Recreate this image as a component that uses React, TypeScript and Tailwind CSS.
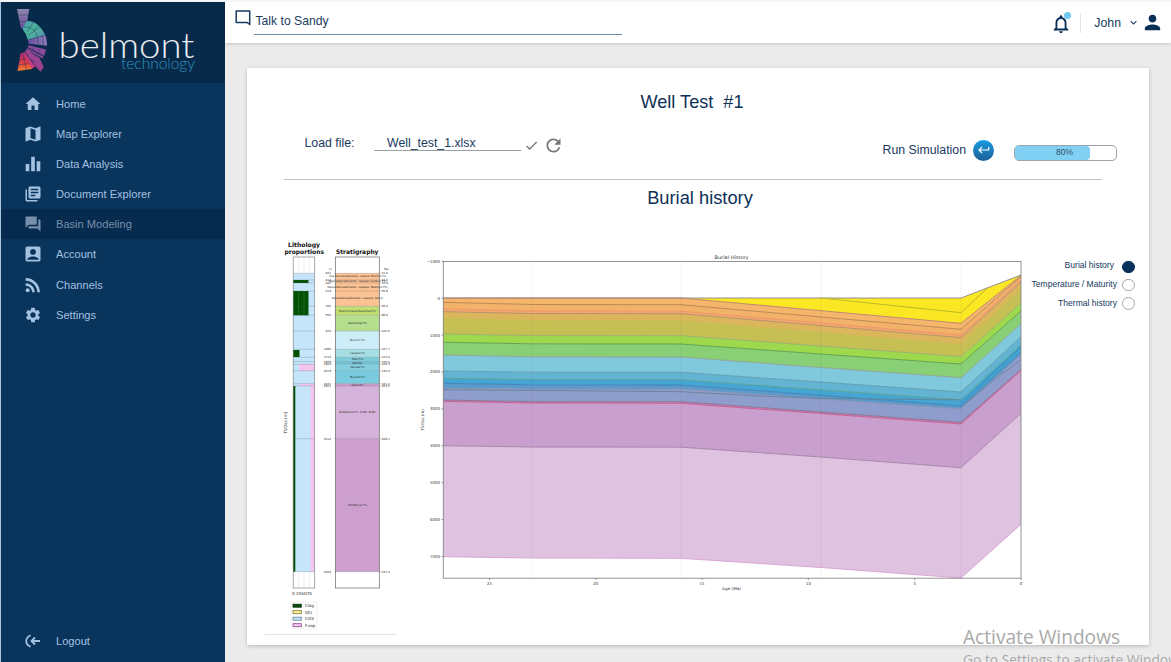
import React from "react";
import type { IconType } from "react-icons";
import {
  MdHome,
  MdMap,
  MdEqualizer,
  MdLibraryBooks,
  MdQuestionAnswer,
  MdAccountBox,
  MdRssFeed,
  MdSettings,
  MdNotificationsNone,
  MdPerson,
  MdExpandMore,
  MdCheck,
  MdRefresh,
  MdKeyboardReturn,
} from "react-icons/md";

type NavItem = { label: string; icon: IconType; size: number; active?: boolean; nudge?: boolean };

const nav: NavItem[] = [
  { label: "Home", icon: MdHome, size: 18 },
  { label: "Map Explorer", icon: MdMap, size: 20 },
  { label: "Data Analysis", icon: MdEqualizer, size: 22 },
  { label: "Document Explorer", icon: MdLibraryBooks, size: 18 },
  { label: "Basin Modeling", icon: MdQuestionAnswer, size: 18, active: true },
  { label: "Account", icon: MdAccountBox, size: 20 },
  { label: "Channels", icon: MdRssFeed, size: 22, nudge: true },
  { label: "Settings", icon: MdSettings, size: 18 },
];

function Logo() {
  return (
    <svg width="224" height="81" viewBox="1 2 224 81" className="block">
      <defs>
        <linearGradient id="lg1" x1="0" y1="0" x2="0" y2="1">
          <stop offset="0" stopColor="#8f86ac" />
          <stop offset="1" stopColor="#6a4f9a" />
        </linearGradient>
        <linearGradient id="lg2" x1="0" y1="0" x2="1" y2="1">
          <stop offset="0" stopColor="#4a9fae" />
          <stop offset=".5" stopColor="#4db39a" />
          <stop offset="1" stopColor="#5c86b4" />
        </linearGradient>
        <linearGradient id="lg3" x1="0" y1="0" x2="1" y2="0">
          <stop offset="0" stopColor="#6a4fa0" />
          <stop offset="1" stopColor="#8d7bb5" />
        </linearGradient>
        <linearGradient id="lg4" x1="0" y1="0" x2="0" y2="1">
          <stop offset="0" stopColor="#b0307c" />
          <stop offset=".55" stopColor="#dd3c44" />
          <stop offset="1" stopColor="#f0872e" />
        </linearGradient>
      </defs>
      <path d="M17 9H29.3L26 27.5L21 28.3Z" fill="url(#lg1)" />
      <path d="M26.500 20.800Q34 20.500 40 27Q44 31.500 45.500 35.500L28 40Q26.500 34 22.500 29Z" fill="url(#lg2)" />
      <path d="M45.500 35.500Q47 40 47 45.700L28.700 43.700Q28.600 41.500 28 40Z" fill="url(#lg3)" />
      <path d="M28.400 45.300L46 49.500Q45.300 54.500 42.500 58.500L27 49.500Z" fill="#8b4b9c" />
      <path d="M27 49L39.500 58L43.800 67L40.500 71.800L35.500 66.500L25 51.800Z" fill="#9a4391" />
      <path d="M24.500 51.800L35.500 66.500L31.500 69L22.500 53Z" fill="#c43b7f" />
      <path d="M20.800 52.700L24 53.600L32 69L17.600 71Z" fill="url(#lg4)" />
      <g stroke="#082a4a" strokeWidth="0.5" strokeOpacity=".75" fill="none">
        <path d="M18 15L28.200 15M20 21.500H27.200M24 27Q32 26.500 36 33Q38 37 38.500 45M27 32L33.500 22M28 35.500L40 27M34 30L38.500 25M28.500 39.500L46 35M43 45V36" />
        <path d="M34 48L31 52L36 57M40 49L36.500 55.500M24.500 51.800L35.500 66.500M22.500 53L26.500 70M18 65L29 63.500M19 60L26 58.500M35.500 62L31 60" />
      </g>
      <path d="M27.500 47.500L45 57" stroke="#082a4a" strokeWidth="1" />
      <text x="58.500" y="57.500" textLength="136" lengthAdjust="spacingAndGlyphs" className="fill-[#e9edf2] font-['Lato'] text-[36px] font-light">
        belmont
      </text>
      <text x="121" y="69.300" textLength="74" lengthAdjust="spacingAndGlyphs" className="fill-[#2f93bb] font-['Lato'] text-[15.500px] font-light">
        technology
      </text>
    </svg>
  );
}

function Sidebar() {
  return (
    <aside className="flex w-[225px] shrink-0 flex-col border-l border-[#a9c6dd] bg-[#09345b]">
      <div className="h-[81px] bg-[#082a4a]">
        <Logo />
      </div>
      <nav className="mt-[6px] flex flex-col">
        {nav.map(({ label, icon: Icon, size, active, nudge }) => (
          <a
            key={label}
            className={
              "flex h-[30px] items-center text-[11.100px] " +
              (active ? "bg-[#072b4e] text-[#7690ab]" : "text-[#a3c1e0]") +
              (nudge ? " mt-px" : "")
            }
          >
            <span className="ml-[21px] mr-[12px] flex w-[22px] justify-center">
              <Icon size={size} />
            </span>
            {label}
          </a>
        ))}
      </nav>
      <a className="mb-[6px] mt-auto flex h-[30px] items-center text-[11.100px] text-[#a3c1e0]">
        <svg width="16" height="16" viewBox="0 0 16 16" className="ml-[24px] mr-[15px]" fill="none" stroke="#a3c1e0" strokeWidth="1.800">
          <path d="M5.500 2.200Q1.200 4.500 1.200 8T5.500 13.800M15 8H7M10 4.500L6.500 8L10 11.500" />
        </svg>
        Logout
      </a>
    </aside>
  );
}

function Header() {
  return (
    <header className="z-10 flex h-[41px] shrink-0 bg-white text-[#173a60] shadow-[0_1px_3px_rgba(0,0,0,0.18)]">
      <svg width="16" height="17" viewBox="0 0 16 17" className="ml-[10px] mt-[8px]" fill="none" stroke="#173a60" strokeWidth="1.500">
        <path d="M1.200 1H14.700V14.500L12.200 12.500H1.200Z" strokeLinejoin="round" />
      </svg>
      <div className="ml-[3px] mt-[10px] h-[23px] w-[368px] border-b border-[#6d8ba5] pl-[1.500px] text-[12.200px] leading-[19px]">
        Talk to Sandy
      </div>
      <div className="ml-auto mr-[7px] flex h-[41px] items-center">
        <div className="relative mr-[8px] mt-[2px]">
          <MdNotificationsNone size={22} color="#0a2f56" />
          <span className="absolute right-[1px] top-[-1px] h-[7px] w-[7px] rounded-full bg-[#6cc9f0]" />
        </div>
        <div className="mr-[13px] h-[20px] w-px bg-[#e2e5e8]" />
        <span className="mt-px text-[12.300px]">John</span>
        <MdExpandMore size={13} className="ml-[6px] mr-px" />
        <MdPerson size={23} color="#0a2f56" />
      </div>
    </header>
  );
}

const segs: [number, number, string][] = [
  [273.3, 306.3, "#fbc294"],
  [306.3, 315.3, "#bfdd72"],
  [315.3, 331, "#b5df8e"],
  [331, 349.3, "#cdeef9"],
  [349.3, 357.3, "#a6dfe3"],
  [357.3, 361.5, "#7dcbdb"],
  [361.5, 364.3, "#6fc4d8"],
  [364.3, 370.7, "#83cfe0"],
  [370.7, 383.7, "#7acbdd"],
  [383.7, 386, "#cf9fce"],
  [386, 438.7, "#d5b2d9"],
  [438.7, 571.7, "#cd9fcf"],
];

const depthMarks: [number, string, string][] = [
  [273.3, "-621", "11.6"],
  [280, "-414", "23.0"],
  [283, "-320", "33.9"],
  [291, "-119", "55.8"],
  [306.3, "320", "66.0"],
  [315.3, "550", "88.6"],
  [331, "970", "100.5"],
  [349.3, "1486", "107.7"],
  [357.3, "1713", "113.0"],
  [361.5, "1829", "125.0"],
  [364.3, "1903", "126.3"],
  [370.7, "2079", "145.0"],
  [383.7, "2431", "161.2"],
  [386, "2501", "163.5"],
  [438.7, "3112", "208.1"],
  [571.7, "6162", "237.0"],
];

const segLabels: [number, string, number][] = [
  [277.3, "Unpreserved sediments - opaque: Planform Fm", 57],
  [282.0, "Deposited sediments - opaque: Cardium Fm", 57],
  [287.6, "Deposited sediments - opaque: Meantop Fm", 60],
  [299.2, "Deposited sediments - opaque: Tatum", 51],
  [311.6, "Mount of Good Samaritan Fm", 37],
  [323.9, "Nambenge Fm", 19],
  [340.8, "Bucomi Fm", 15],
  [353.9, "Cangana Fm", 15],
  [360.1, "Mavi Fm", 11],
  [363.8, "Bati Mu", 10],
  [368.4, "Mavude Fm", 14],
  [378.2, "Bucond Fm", 15],
  [386.0, "Salvit Fm", 12],
  [413.4, "Sedalations Fm. & Mbr. B Mbr", 37],
  [506.2, "Wild Blumar Fm", 19],
];

const legend = [
  { name: "Clay", fill: "#035203", stroke: "#0a2a0a" },
  { name: "Qtz", fill: "#fdf29a", stroke: "#7d7430" },
  { name: "CO3", fill: "#c3e6fb", stroke: "#5f7f9a" },
  { name: "Fvop", fill: "#f7c8f3", stroke: "#85458c" },
];

function Stratigraphy() {
  return (
    <svg width="131" height="396" viewBox="265 239 131 396" className="font-['DejaVu_Sans']" fill="#222">
      <g fontSize="6.200" fontWeight="700" fill="#111">
        <text x="288" y="247" textLength="32" lengthAdjust="spacingAndGlyphs">Lithology</text>
        <text x="284.500" y="254" textLength="39.500" lengthAdjust="spacingAndGlyphs">proportions</text>
        <text x="336" y="254" textLength="42.500" lengthAdjust="spacingAndGlyphs">Stratigraphy</text>
      </g>
      <path d="M298.500 257V273M304 257V273M309.500 257V273M298.500 572V588M304 572V588M309.500 572V588" stroke="#e8e8e8" strokeWidth=".6" />
      <rect x="293" y="273.300" width="21.700" height="298.400" fill="#c5e5fa" />
      <g fill="#035203">
        <rect x="293" y="280" width="15.500" height="3" />
        <rect x="293" y="291" width="15.500" height="24.300" />
        <rect x="293" y="350" width="6.500" height="7" />
        <rect x="293" y="386" width="2.300" height="185.700" />
      </g>
      <path d="M298.500 291V315.300M304 291V315.300" stroke="#3c7a3c" strokeWidth=".5" />
      <g fill="#f4c6ef">
        <rect x="299.300" y="364" width="15.400" height="7" />
        <rect x="299.300" y="383.700" width="15.400" height="2.300" />
        <rect x="310.500" y="386" width="4.200" height="185.700" />
      </g>
      {segs.map(([a, b, c]) => (
        <rect key={a} x="335.500" y={a} width="43.800" height={b - a} fill={c} />
      ))}
      {depthMarks.map(([y, l, r]) => (
        <g key={y} fontSize="2.900">
          <path d={`M293 ${y}H314.700M334 ${y}H381`} stroke="#4b5563" strokeOpacity=".45" strokeWidth=".5" />
          <text x="331" y={y + 1} textAnchor="end">{l}</text>
          <text x="381.500" y={y + 1}>{r}</text>
        </g>
      ))}
      <g fontSize="2.900">
        <text x="329" y="269.700">m</text>
        <text x="384" y="269.700">Ma</text>
      </g>
      {segLabels.map(([y, t, w]) => (
        <text key={t} x={357.5 - w / 2} y={y} fontSize="2.900" textLength={w} lengthAdjust="spacingAndGlyphs">
          {t}
        </text>
      ))}
      <g fill="none" stroke="#666" strokeWidth=".7">
        <rect x="293.200" y="257" width="21.500" height="331" stroke="#888" />
        <rect x="335.500" y="257" width="43.800" height="331" />
      </g>
      <text x="292" y="595" fontSize="4.200" textLength="20" lengthAdjust="spacingAndGlyphs">0 255075</text>
      <text transform="translate(287 433.500) rotate(-90)" fontSize="4.200" textLength="22" lengthAdjust="spacingAndGlyphs">TVDss (m)</text>
      <rect x="291" y="602" width="26" height="27" rx="1" fill="none" stroke="#e5e5e5" strokeWidth=".6" />
      {legend.map((l, i) => (
        <g key={l.name}>
          <rect x="293" y={604.2 + i * 6.5} width="8.300" height="3" fill={l.fill} stroke={l.stroke} strokeWidth=".8" />
          <text x="305" y={607.4 + i * 6.5} fontSize="4.200">{l.name}</text>
        </g>
      ))}
      <path d="M265 634.500H396" stroke="#e2e2e2" />
    </svg>
  );
}

const xs = [443, 531.6, 681, 821, 961, 1021];

type Horizon = { y: number[]; fill?: string; line: string };

// Each horizon is the top of the layer that its fill colours.
const horizons: Horizon[] = [
  { y: [298, 298, 298, 298, 298, 275], fill: "#fbe723", line: "#8a8490" },
  { y: [298, 298, 298, 310.7, 323.3, 275.3], fill: "#f5b66c", line: "#b98268" },
  { y: [302.3, 304.5, 304.7, 317, 329.3, 276.5], fill: "#f3b26a", line: "#b5804e" },
  { y: [309, 311, 311.2, 323, 335, 280], fill: "#f0a96c", line: "#f08f62" },
  { y: [311.7, 313.6, 313.7, 325.7, 337.7, 282], fill: "#dcb65c", line: "#b48a68" },
  { y: [317.7, 320, 320.3, 332, 344, 289], fill: "#c6c054", line: "#cfb750" },
  { y: [334, 335.6, 335.7, 346, 356.7, 303], fill: "#9ed84c", line: "#98ad70" },
  { y: [342.3, 343.8, 344, 354, 364, 311], fill: "#88cf76", line: "#5c9c48" },
  { y: [355, 356.8, 357, 367.5, 377.7, 323.7], fill: "#80c8dc", line: "#8fa08f" },
  { y: [371, 372.2, 372.3, 382, 392, 336.7], fill: "#62b4d2", line: "#5f9cb0" },
  { y: [378.3, 379.6, 379.7, 390, 399.7, 345], fill: "#45a5d3", line: "#559f90" },
  { y: [383.3, 384.8, 385, 395.3, 406, 352], fill: "#5b9bcb", line: "#3a80b4" },
  { y: [388.3, 389, 389, 399, 409, 355], fill: "#8f9dcc", line: "#8790b0" },
  { y: [400, 401.6, 401.7, 412, 422.3, 369.3], fill: "#c087b8", line: "#82708f" },
  { y: [401.3, 403, 403.3, 413.5, 424, 370.5], fill: "#c99fce", line: "#c8528c" },
  { y: [445.7, 447, 447.2, 457, 467.7, 413.3], fill: "#dfc2e0", line: "#a080a4" },
  { y: [556.7, 558, 558.3, 567.5, 578, 524.3], line: "#d79fd2" },
];

const pts = (y: number[]) => y.map((v, i) => `${xs[i]},${v}`);

const yTicks = [-1000, 0, 1000, 2000, 3000, 4000, 5000, 6000, 7000];
const xTicks = [25, 20, 15, 10, 5, 0];

function BurialChart() {
  return (
    <svg width="612" height="345" viewBox="415 249 612 345" className="font-['DejaVu_Sans']" fill="#333">
      <text x="714.500" y="258.500" fontSize="4.800" textLength="34" lengthAdjust="spacingAndGlyphs">Burial History</text>
      {horizons.slice(0, -1).map((h, i) => (
        <polygon key={i} points={[...pts(h.y), ...pts(horizons[i + 1].y).reverse()].join(" ")} fill={h.fill} />
      ))}
      <g fill="none" strokeWidth=".9">
        {horizons.map((h, i) => (
          <polyline key={i} points={pts(h.y).join(" ")} stroke={h.line} />
        ))}
        <path d="M821 298L961 312.700L988 287.500" stroke="#b5b526" />
        <path d="M443 389.700L531.600 390.400L681 391.700L770 396.500L821 398.300L890 399.200L961 399.900" stroke="#63839a" />
        <path d="M961 407L1000 375L1009 369L1021 359.500" stroke="#71809f" />
        <path d="M961 403.300L1021 347" stroke="#3384b8" />
      </g>
      <path d="M531.600 262V578M681 262V578M821 262V578M961 262V578" stroke="#40305a" strokeOpacity=".07" strokeWidth=".8" />
      <rect x="443.300" y="261.500" width="577.700" height="316.700" fill="none" stroke="#888" strokeWidth=".9" />
      <g fontSize="3.900">
        {yTicks.map((t) => {
          const y = 298.2 + t * 0.0369;
          return (
            <g key={t}>
              <path d={`M441.500 ${y}H443.300`} stroke="#555" strokeWidth=".6" />
              <text x="440" y={y + 1.4} textAnchor="end">{t < 0 ? "−1000" : t}</text>
            </g>
          );
        })}
        {xTicks.map((t) => {
          const x = 1021 - t * 21.26;
          return (
            <g key={t}>
              <path d={`M${x} 578.200V580`} stroke="#555" strokeWidth=".6" />
              <text x={x} y="584.600" textAnchor="middle">{t}</text>
            </g>
          );
        })}
        <text x="722" y="590" textLength="19" lengthAdjust="spacingAndGlyphs">Age (Ma)</text>
        <text transform="translate(423.500 430.500) rotate(-90)" textLength="21.500" lengthAdjust="spacingAndGlyphs">TVDss (m)</text>
      </g>
    </svg>
  );
}

const views = [
  { label: "Burial history", on: true },
  { label: "Temperature / Maturity", on: false },
  { label: "Thermal history", on: false },
];

function WellCard() {
  return (
    <section className="ml-[22px] mt-[25px] flex h-[577px] w-[902px] flex-col bg-white text-[#173a60] shadow-[0_1px_4px_rgba(0,0,0,0.22)]">
      <h1 className="mt-[21px] whitespace-pre pr-[12px] text-center text-[18.100px] leading-[26px] text-[#0e3157]">Well Test  #1</h1>
      <div className="ml-[37px] flex h-[65px] w-[818px] border-b border-[#bfc2c4]">
        <span className="ml-[20.500px] mt-[19px] w-[69.500px] text-[12.300px] leading-[18px]">Load file:</span>
        <span className="mt-[18px] h-[18px] w-[147px] border-b border-[#98a0a6] pl-[13px] text-[12.300px] leading-[20px]">Well_test_1.xlsx</span>
        <MdCheck size={15} className="ml-[3px] mt-[23px] text-[#777]" />
        <MdRefresh size={21} className="ml-[4px] mt-[20px] text-[#777]" />
        <div className="ml-auto mr-[-15px] mt-[24px] flex h-[22px] items-center">
          <span className="mr-[7px] text-[12.300px]">Run Simulation</span>
          <span className="mr-[20px] flex h-[21px] w-[21px] items-center justify-center rounded-full bg-gradient-to-b from-[#169ce0] to-[#1d5f97] text-white">
            <MdKeyboardReturn size={14} />
          </span>
          <div className="relative mt-[5px] h-[16px] w-[103px] overflow-hidden rounded-[5px] border border-[#9aa4aa] bg-white">
            <div className="h-full w-[75px] rounded-r-[4px] bg-[#7fd0f2]" />
            <span className="absolute inset-0 flex items-center justify-center pr-[2px] text-[8.500px] text-[#31506b]">80%</span>
          </div>
        </div>
      </div>
      <h2 className="mt-[5px] pl-[4px] text-center text-[18.300px] leading-[26px] text-[#0e3157]">Burial history</h2>
      <div className="ml-[18px] mt-[28px] flex items-start">
        <Stratigraphy />
        <div className="ml-[19px] mt-[10px]">
          <BurialChart />
        </div>
        <ul className="mt-[18px] flex w-[107.500px] flex-col text-[8.550px]">
          {views.map((v) => (
            <li key={v.label} className="flex h-[18.500px] items-center justify-end">
              <span className={v.on ? "mr-[8px] pb-[2px]" : "mr-[5px]"}>{v.label}</span>
              <span
                className={
                  "h-[12.500px] w-[12.500px] shrink-0 rounded-full border " +
                  (v.on ? "mt-px border-[#06305a] bg-[#06305a]" : "border-[#a8a8a8] bg-white")
                }
              />
            </li>
          ))}
        </ul>
      </div>
    </section>
  );
}

export default function App() {
  return (
    <div className="relative flex h-[662px] w-[1171px] overflow-hidden border-t-2 border-[#f4f5f5] bg-[#ebebeb] font-['Liberation_Sans',Arial,sans-serif]">
      <Sidebar />
      <main className="flex min-w-0 flex-1 flex-col">
        <Header />
        <WellCard />
      </main>
      <div className="absolute left-[963px] top-[622px] whitespace-nowrap font-['Open_Sans'] text-[#a9a9a9]">
        <div className="text-[19.150px] leading-[26px]">Activate Windows</div>
        <div className="mt-[2px] text-[13.800px] leading-[16px]">Go to Settings to activate Windows.</div>
      </div>
    </div>
  );
}
